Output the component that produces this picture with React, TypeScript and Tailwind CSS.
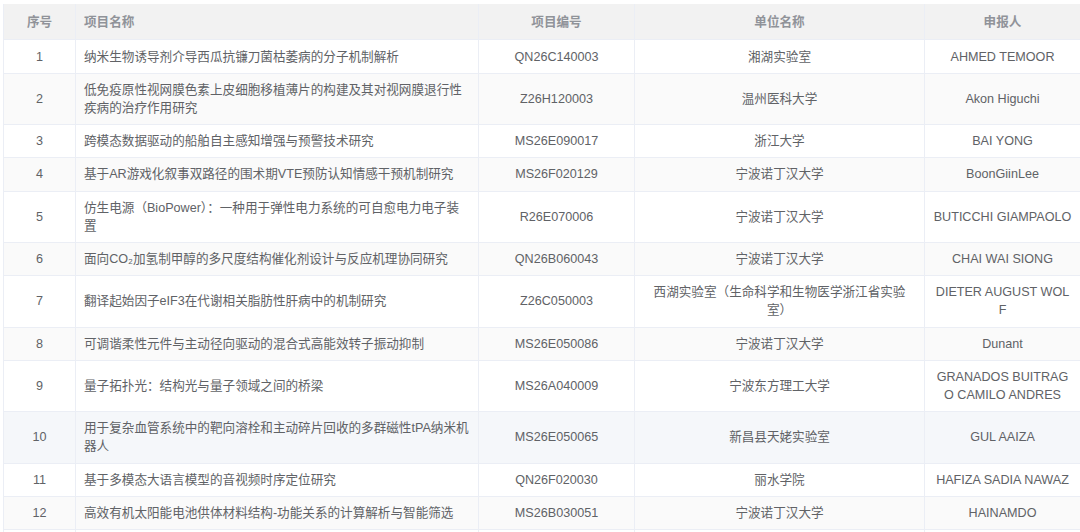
import React from "react";

type Row = {
  no: string;
  name: React.ReactNode;
  code: string;
  unit: React.ReactNode;
  person: React.ReactNode;
  bg: string;
};

const rows: Row[] = [
  { no: "1", name: "纳米生物诱导剂介导西瓜抗镰刀菌枯萎病的分子机制解析", code: "QN26C140003", unit: "湘湖实验室", person: "AHMED TEMOOR", bg: "bg-white" },
  { no: "2", name: (<>低免疫原性视网膜色素上皮细胞移植薄片的构建及其对视网膜退行性<br />疾病的治疗作用研究</>), code: "Z26H120003", unit: "温州医科大学", person: "Akon Higuchi", bg: "bg-[#fafafa]" },
  { no: "3", name: "跨模态数据驱动的船舶自主感知增强与预警技术研究", code: "MS26E090017", unit: "浙江大学", person: "BAI YONG", bg: "bg-white" },
  { no: "4", name: "基于AR游戏化叙事双路径的围术期VTE预防认知情感干预机制研究", code: "MS26F020129", unit: "宁波诺丁汉大学", person: "BoonGiinLee", bg: "bg-[#fafafa]" },
  { no: "5", name: (<>仿生电源（BioPower）：一种用于弹性电力系统的可自愈电力电子装<br />置</>), code: "R26E070006", unit: "宁波诺丁汉大学", person: "BUTICCHI GIAMPAOLO", bg: "bg-white" },
  { no: "6", name: "面向CO₂加氢制甲醇的多尺度结构催化剂设计与反应机理协同研究", code: "QN26B060043", unit: "宁波诺丁汉大学", person: "CHAI WAI SIONG", bg: "bg-[#fafafa]" },
  { no: "7", name: "翻译起始因子eIF3在代谢相关脂肪性肝病中的机制研究", code: "Z26C050003", unit: (<>西湖实验室（生命科学和生物医学浙江省实验<br />室）</>), person: (<>DIETER AUGUST WOL<br />F</>), bg: "bg-white" },
  { no: "8", name: "可调谐柔性元件与主动径向驱动的混合式高能效转子振动抑制", code: "MS26E050086", unit: "宁波诺丁汉大学", person: "Dunant", bg: "bg-[#fafafa]" },
  { no: "9", name: "量子拓扑光：结构光与量子领域之间的桥梁", code: "MS26A040009", unit: "宁波东方理工大学", person: (<>GRANADOS BUITRAG<br />O CAMILO ANDRES</>), bg: "bg-white" },
  { no: "10", name: (<>用于复杂血管系统中的靶向溶栓和主动碎片回收的多群磁性tPA纳米机<br />器人</>), code: "MS26E050065", unit: "新昌县天姥实验室", person: "GUL AAIZA", bg: "bg-[#f5f7fa]" },
  { no: "11", name: "基于多模态大语言模型的音视频时序定位研究", code: "QN26F020030", unit: "丽水学院", person: "HAFIZA SADIA NAWAZ", bg: "bg-white" },
  { no: "12", name: "高效有机太阳能电池供体材料结构-功能关系的计算解析与智能筛选", code: "MS26B030051", unit: "宁波诺丁汉大学", person: "HAINAMDO", bg: "bg-[#fafafa]" },
];

const cell = "border-b border-r border-[#ebeef5] px-2 py-[7.16px] align-middle";
const head = "border-b border-r border-[#ebeef5] px-2 py-[8.7px] align-middle font-bold";

export default function App() {
  return (
    <div
      className="w-[1080px] h-[532px] overflow-hidden bg-white pt-[4px] pl-[3px]"
      style={{ fontFamily: '"Liberation Sans", Arial, "Noto Sans CJK SC", sans-serif' }}
    >
      <table className="w-[1077px] table-fixed border-collapse border-l border-[#ebeef5] text-[12.6px] leading-[18px] text-[#606266]">
        <colgroup>
          <col className="w-[72px]" />
          <col className="w-[403px]" />
          <col className="w-[156px]" />
          <col className="w-[290px]" />
          <col className="w-[156px]" />
        </colgroup>
        <thead>
          <tr className="bg-[#f2f2f2] text-[#909399]">
            <th className={`${head} text-center`}>序号</th>
            <th className={`${head} text-left`}>项目名称</th>
            <th className={`${head} text-center`}>项目编号</th>
            <th className={`${head} text-center`}>单位名称</th>
            <th className={`${head} text-center`}>申报人</th>
          </tr>
        </thead>
        <tbody>
          {rows.map((r) => (
            <tr key={r.no} className={r.bg}>
              <td className={`${cell} text-center`}>{r.no}</td>
              <td className={`${cell} text-left`}>{r.name}</td>
              <td className={`${cell} text-center`}>{r.code}</td>
              <td className={`${cell} text-center`}>{r.unit}</td>
              <td className={`${cell} text-center`}>{r.person}</td>
            </tr>
          ))}
          <tr className="bg-white">
            <td className={cell}>&nbsp;</td>
            <td className={cell}>&nbsp;</td>
            <td className={cell}>&nbsp;</td>
            <td className={cell}>&nbsp;</td>
            <td className={cell}>&nbsp;</td>
          </tr>
        </tbody>
      </table>
    </div>
  );
}
